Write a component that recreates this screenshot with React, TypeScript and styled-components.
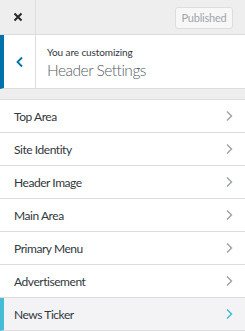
import { createGlobalStyle } from 'styled-components';
import styled from 'styled-components';

const GlobalStyle = createGlobalStyle`
    html, body {
        margin: 0;
        padding: 0;
        background: #eee;
        font-family: Lato, "Open Sans", sans-serif;
    }
`;

const Panel = styled.div`
    width: 245px;
    height: 331px;
    overflow: hidden;
    background: #eee;
    display: flex;
    flex-direction: column;
`;

const TopBar = styled.div`
    height: 34px;
    display: flex;
    align-items: center;
    justify-content: space-between;
    border-bottom: 1px solid #ddd;
    background: #eee;
`;

const CloseButton = styled.div`
    width: 35px;
    height: 34px;
    display: flex;
    align-items: center;
    justify-content: center;
    border-right: 1px solid #ddd;
`;

const PublishButton = styled.div`
    box-sizing: border-box;
    margin: 1px 12px 0 0;
    width: 58px;
    height: 22px;
    border: 1px solid #ddd;
    border-radius: 3px;
    background: #f7f7f7;
    color: #a0a5aa;
    font-size: 11px;
    letter-spacing: -0.2px;
    display: flex;
    align-items: center;
    justify-content: center;
`;

const SectionHeader = styled.div`
    height: 53px;
    display: flex;
    background: #fff;
    border-bottom: 1px solid #ddd;
    border-left: 4px solid #0073aa;
`;

const BackButton = styled.div`
    width: 31px;
    display: flex;
    align-items: center;
    justify-content: center;
    border-right: 1px solid #ddd;
`;

const Titles = styled.div`
    padding: 10px 0 0 11px;
    display: flex;
    flex-direction: column;
`;

const Caption = styled.span`
    font-size: 10px;
    letter-spacing: -0.1px;
    color: #32373c;
    line-height: 14px;
`;

const Title = styled.span`
    font-size: 15.5px;
    font-weight: 300;
    letter-spacing: -0.5px;
    color: #555d66;
    line-height: 22px;
`;

const List = styled.div`
    margin-top: 10px;
    border-top: 1px solid #ddd;
    display: flex;
    flex-direction: column;
`;

const Row = styled.div<{ $active?: boolean }>`
    height: 32px;
    display: flex;
    align-items: center;
    justify-content: space-between;
    padding: 0 12px 0 ${p => (p.$active ? '10px' : '14px')};
    border-bottom: 1px solid #ddd;
    border-left: ${p => (p.$active ? '4px solid #45bcd6' : 'none')};
    background: ${p => (p.$active ? '#f3f3f5' : '#fff')};
    color: #32373c;
    font-size: 12px;
    letter-spacing: -0.45px;
`;

const Chevron = ({ color }: { color: string }) => (
    <svg width="8" height="12" viewBox="0 0 8 12">
        <path d="M2 1.5 L6.5 6 L2 10.5" fill="none" stroke={color} strokeWidth="1.5" />
    </svg>
);

const items = ['Top Area', 'Site Identity', 'Header Image', 'Main Area', 'Primary Menu', 'Advertisement', 'News Ticker'];

export default function App() {
    return (
        <Panel>
            <GlobalStyle />
            <TopBar>
                <CloseButton>
                    <svg width="10" height="10" viewBox="0 0 10 10">
                        <path d="M1.5 1.5 L8.5 8.5 M8.5 1.5 L1.5 8.5" stroke="#23282d" strokeWidth="2" />
                    </svg>
                </CloseButton>
                <PublishButton>Published</PublishButton>
            </TopBar>
            <SectionHeader>
                <BackButton>
                    <svg width="8" height="12" viewBox="0 0 8 12">
                        <path d="M6 1.5 L1.5 6 L6 10.5" fill="none" stroke="#0073aa" strokeWidth="1.8" />
                    </svg>
                </BackButton>
                <Titles>
                    <Caption>You are customizing</Caption>
                    <Title>Header Settings</Title>
                </Titles>
            </SectionHeader>
            <List>
                {items.map((item, i) => {
                    const active = i === items.length - 1;
                    return (
                        <Row key={item} $active={active}>
                            {item}
                            <Chevron color={active ? '#45bcd6' : '#a0a5aa'} />
                        </Row>
                    );
                })}
            </List>
        </Panel>
    );
}
